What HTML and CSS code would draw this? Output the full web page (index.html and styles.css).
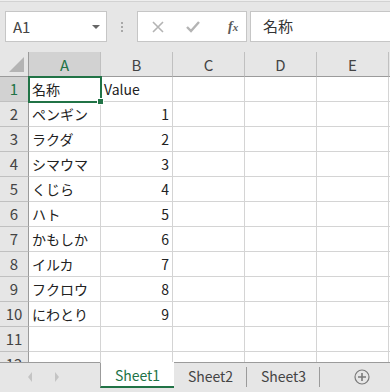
FILE: index.html
```html
<!DOCTYPE html>
<html lang="ja">
<head>
    <meta charset="UTF-8">
    <meta name="viewport" content="width=device-width, initial-scale=1.0">
    <title>Sheet</title>
    <link rel="stylesheet" href="styles.css">
</head>
<body>

    <!-- Formula bar -->
    <div class="toolbar">
        <div class="name-box">
            <span>A1</span>
            <span class="drop"></span>
        </div>
        <div class="grip"><i></i><i></i><i></i></div>
        <div class="fx-buttons">
            <svg width="12" height="12" viewBox="0 0 12 12"><path d="M1 1L11 11M11 1L1 11" stroke="#b4b4b4" stroke-width="1.6" fill="none"/></svg>
            <svg width="14" height="12" viewBox="0 0 14 12"><path d="M1 6L5 10L13 1" stroke="#b4b4b4" stroke-width="2.4" fill="none"/></svg>
            <span class="fx">f<small>x</small></span>
        </div>
        <div class="formula">名称</div>
    </div>

    <!-- Grid -->
    <div class="sheet">
        <div class="grid" id="grid">
            <div class="corner"><span></span></div>
            <div class="col-head active">A</div>
            <div class="col-head">B</div>
            <div class="col-head">C</div>
            <div class="col-head">D</div>
            <div class="col-head">E</div>
            <div class="col-head last"></div>
        </div>
    </div>

    <!-- Sheet tabs -->
    <div class="tabbar">
        <div class="nav">
            <span class="arrow left"></span>
            <span class="arrow right"></span>
        </div>
        <div class="tab current">Sheet1</div>
        <div class="tab">Sheet2</div>
        <div class="tab">Sheet3</div>
        <div class="add">
            <svg width="16" height="16" viewBox="0 0 16 16"><circle cx="8" cy="8" r="7" stroke="#7a7a7a" stroke-width="1.2" fill="none"/><path d="M8 4V12M4 8H12" stroke="#7a7a7a" stroke-width="1.6"/></svg>
        </div>
    </div>

    <script>
        // Build the data rows
        const rows = [
            ['名称', 'Value'],
            ['ペンギン', 1],
            ['ラクダ', 2],
            ['シマウマ', 3],
            ['くじら', 4],
            ['ハト', 5],
            ['かもしか', 6],
            ['イルカ', 7],
            ['フクロウ', 8],
            ['にわとり', 9],
            ['', ''],
            ['', '']
        ];
        const grid = document.getElementById('grid');

        rows.forEach((row, i) => {
            const head = document.createElement('div');
            head.className = 'row-head' + (i === 0 ? ' active' : '');
            head.textContent = i + 1;
            grid.appendChild(head);

            for (let c = 0; c < 6; c++) {
                const cell = document.createElement('div');
                cell.className = 'cell';
                const value = row[c];
                if (value !== undefined && value !== '') {
                    cell.textContent = value;
                    if (typeof value === 'number') cell.classList.add('num');
                }
                if (i === 0 && c === 0) cell.classList.add('selected');
                grid.appendChild(cell);
            }
        });
    </script>
</body>
</html>
```

FILE: styles.css
```css
body {
    margin: 0;
    padding: 0;
    width: 390px;
    height: 392px;
    overflow: hidden;
    background: #e6e6e6;
    font-family: "Noto Sans CJK JP", "Noto Sans", sans-serif;
    color: #333;
    display: flex;
    flex-direction: column;
}

/* Formula bar */
.toolbar {
    height: 52px;
    border-top: 1px solid #eeeeee;
    display: flex;
    align-items: flex-start;
    padding-top: 10px;
    box-sizing: border-box;
    flex-shrink: 0;
    box-shadow: inset 0 1px 0 #d2d2d2;
}

.name-box {
    margin-left: 5px;
    width: 102px;
    height: 31px;
    box-sizing: border-box;
    background: #fff;
    border: 1px solid #c6c6c6;
    display: flex;
    align-items: center;
    justify-content: space-between;
    padding: 0 6px 0 7px;
    font-size: 15px;
    color: #444;
}

.name-box .drop {
    width: 0;
    height: 0;
    border-left: 4px solid transparent;
    border-right: 4px solid transparent;
    border-top: 4px solid #666;
    margin-top: 1px;
}

.grip {
    width: 30px;
    height: 31px;
    display: flex;
    flex-direction: column;
    align-items: center;
    justify-content: center;
    gap: 2px;
}

.grip i {
    width: 2px;
    height: 2px;
    background: #a8a8a8;
}

.fx-buttons {
    width: 110px;
    height: 31px;
    box-sizing: border-box;
    background: #fff;
    border: 1px solid #c6c6c6;
    display: flex;
    align-items: center;
    padding-left: 14px;
    gap: 22px;
}

.fx {
    font-family: "Liberation Serif", serif;
    font-style: italic;
    font-weight: bold;
    font-size: 14px;
    color: #5a5a5a;
    margin-left: 6px;
}

.fx small {
    font-size: 11px;
}

.formula {
    margin-left: 3px;
    flex: 1;
    height: 31px;
    box-sizing: border-box;
    background: #fff;
    border: 1px solid #c6c6c6;
    border-right: none;
    padding-left: 12px;
    font-size: 15px;
    line-height: 28px;
    color: #333;
}

/* Grid */
.sheet {
    flex: 1;
    overflow: hidden;
    background: #fff;
}

.grid {
    display: grid;
    grid-template-columns: 29px repeat(5, 72px) 1fr;
    grid-template-rows: 25px;
    grid-auto-rows: 25px;
}

.corner {
    background: #e6e6e6;
    border-right: 1px solid #9b9b9b;
    border-bottom: 1px solid #9b9b9b;
    position: relative;
}

.corner span {
    position: absolute;
    right: 4px;
    bottom: 4px;
    width: 0;
    height: 0;
    border-left: 15px solid transparent;
    border-bottom: 15px solid #b4b4b4;
}

.col-head {
    background: #e6e6e6;
    border-right: 1px solid #c0c0c0;
    border-bottom: 1px solid #9b9b9b;
    text-align: center;
    font-size: 15px;
    line-height: 25px;
    color: #444;
}

.col-head.last {
    border-right: none;
}

.col-head.active,
.row-head.active {
    background: #d2d2d2;
    color: #217346;
}

.row-head {
    background: #e6e6e6;
    border-right: 1px solid #9b9b9b;
    border-bottom: 1px solid #c0c0c0;
    text-align: center;
    font-size: 15px;
    line-height: 24px;
    color: #444;
}

.cell {
    border-right: 1px solid #d4d4d4;
    border-bottom: 1px solid #d4d4d4;
    font-size: 14px;
    line-height: 24px;
    padding: 0 3px;
    white-space: nowrap;
    overflow: hidden;
    color: #222;
}

.cell.num {
    text-align: right;
    padding-right: 3px;
}

.cell.selected {
    outline: 2px solid #217346;
    outline-offset: -1px;
    position: relative;
    overflow: visible;
    z-index: 1;
}

.cell.selected::after {
    content: "";
    position: absolute;
    right: -4px;
    bottom: -4px;
    width: 5px;
    height: 5px;
    background: #217346;
    border: 1px solid #fff;
}

/* Sheet tabs */
.tabbar {
    height: 29px;
    border-top: 1px solid #9b9b9b;
    display: flex;
    align-items: flex-start;
    flex-shrink: 0;
    font-size: 14px;
    color: #444;
}

.nav {
    width: 100px;
    height: 27px;
    display: flex;
    align-items: center;
    padding-left: 28px;
    gap: 23px;
    box-sizing: border-box;
}

.arrow {
    width: 0;
    height: 0;
    border-top: 5px solid transparent;
    border-bottom: 5px solid transparent;
}

.arrow.left {
    border-right: 4px solid #c4c4c4;
}

.arrow.right {
    border-left: 4px solid #c4c4c4;
}

.tab {
    width: 73px;
    text-align: center;
    line-height: 27px;
    position: relative;
}

.tab + .tab::before {
    content: "";
    position: absolute;
    right: 0;
    top: 4px;
    height: 20px;
    border-right: 1px solid #9b9b9b;
}

.tab.current {
    background: #fff;
    color: #217346;
    border-left: 1px solid #9b9b9b;
    border-bottom: 2px solid #217346;
    height: 23px;
    line-height: 25px;
    margin-top: -1px;
    border-top: 1px solid #fff;
}

.add {
    flex: 1;
    height: 27px;
    display: flex;
    align-items: center;
    padding-left: 34px;
}
```
